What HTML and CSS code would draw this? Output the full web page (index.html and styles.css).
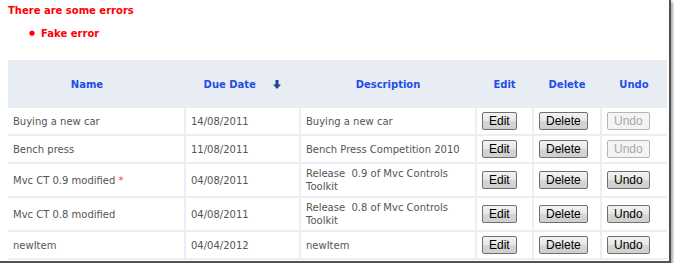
FILE: index.html
```html
<!DOCTYPE html>
<html>

<head>
    <title>Tasks</title>
    <link rel="stylesheet" href="styles.css">
</head>

<body>
    <div class="frame">
        <div class="errors">
            <p class="errors-title">There are some errors</p>
            <ul class="errors-list">
                <li>Fake error</li>
            </ul>
        </div>

        <table class="grid">
            <colgroup>
                <col class="col-name">
                <col class="col-date">
                <col class="col-desc">
                <col class="col-edit">
                <col class="col-delete">
                <col class="col-undo">
            </colgroup>
            <thead>
                <tr>
                    <th class="th-name">Name</th>
                    <th>Due Date
                        <svg class="sort-arrow" width="8" height="9" viewBox="0 0 8 9">
                            <path d="M2.5 0h3v4.5H8L4 9 0 4.5h2.5z" fill="#1c4696"/>
                        </svg>
                    </th>
                    <th>Description</th>
                    <th>Edit</th>
                    <th>Delete</th>
                    <th>Undo</th>
                </tr>
            </thead>
            <tbody>
                <tr class="row-short">
                    <td>Buying a new car</td>
                    <td>14/08/2011</td>
                    <td>Buying a new car</td>
                    <td class="btn-cell"><button class="btn">Edit</button></td>
                    <td class="btn-cell"><button class="btn">Delete</button></td>
                    <td class="btn-cell"><button class="btn" disabled>Undo</button></td>
                </tr>
                <tr class="row-short">
                    <td>Bench press</td>
                    <td>11/08/2011</td>
                    <td>Bench Press Competition 2010</td>
                    <td class="btn-cell"><button class="btn">Edit</button></td>
                    <td class="btn-cell"><button class="btn">Delete</button></td>
                    <td class="btn-cell"><button class="btn" disabled>Undo</button></td>
                </tr>
                <tr class="row-tall">
                    <td>Mvc CT 0.9 modified <span class="changed">*</span></td>
                    <td>04/08/2011</td>
                    <td>Release&nbsp; 0.9 of Mvc Controls Toolkit</td>
                    <td class="btn-cell"><button class="btn">Edit</button></td>
                    <td class="btn-cell"><button class="btn">Delete</button></td>
                    <td class="btn-cell"><button class="btn">Undo</button></td>
                </tr>
                <tr class="row-tall">
                    <td>Mvc CT 0.8 modified</td>
                    <td>04/08/2011</td>
                    <td>Release&nbsp; 0.8 of Mvc Controls Toolkit</td>
                    <td class="btn-cell"><button class="btn">Edit</button></td>
                    <td class="btn-cell"><button class="btn">Delete</button></td>
                    <td class="btn-cell"><button class="btn">Undo</button></td>
                </tr>
                <tr class="row-short">
                    <td>newItem</td>
                    <td>04/04/2012</td>
                    <td>newItem</td>
                    <td class="btn-cell"><button class="btn">Edit</button></td>
                    <td class="btn-cell"><button class="btn">Delete</button></td>
                    <td class="btn-cell"><button class="btn">Undo</button></td>
                </tr>
            </tbody>
        </table>
    </div>
</body>

</html>
```

FILE: styles.css
```css
body {
    margin: 0;
    background-color: #fff;
    font-family: "DejaVu Sans", Verdana, sans-serif;
    font-size: 10px;
    color: #555;
}

.frame {
    width: 671px;
    height: 263px;
    border-right: 2px solid #505050;
    border-bottom: 2px solid #505050;
    box-shadow: 2px 2px 3px rgba(0, 0, 0, 0.35);
    overflow: hidden;
    box-sizing: border-box;
}

.errors {
    color: #f00;
    font-weight: bold;
    font-size: 10px;
    padding: 5px 0 0 8px;
}

.errors-title {
    margin: 0;
}

.errors-list {
    margin: 12px 0 0 0;
    padding-left: 33px;
    list-style: none;
}

.errors-list li::before {
    content: "\25CF";
    font-size: 7px;
    vertical-align: 2px;
    margin: 0 6px 0 -12px;
}

.grid {
    border-collapse: collapse;
    table-layout: fixed;
    margin: 21px 0 0 8px;
    width: 659px;
}

.col-name { width: 177px; }
.col-date { width: 115px; }
.col-desc { width: 176px; }
.col-edit { width: 57px; }
.col-delete { width: 68px; }
.col-undo { width: 66px; }

.grid th {
    background-color: #e8edf4;
    color: #1f4de6;
    font-weight: bold;
    font-size: 10px;
    height: 48px;
    padding: 0;
}

.grid th.th-name {
    padding-right: 19px;
}

.grid td {
    border: 2px solid #ebeff5;
    padding: 0 5px;
    line-height: 13px;
}

.grid tr:first-child td {
    border-top: none;
}

.grid td:first-child {
    border-left: none;
}

.grid td:last-child {
    border-right: none;
}

.row-short td {
    height: 26px;
}

.row-tall td {
    height: 32px;
}

.sort-arrow {
    margin-left: 14px;
    vertical-align: -1px;
}

.changed {
    color: #f33;
}

.btn-cell {
    text-align: left;
}

.btn {
    font-family: "Liberation Sans", Arial, sans-serif;
    font-size: 12px;
    color: #000;
    height: 18px;
    padding: 0 6px;
    border: 1px solid #707070;
    border-radius: 2px;
    background: linear-gradient(#f2f2f2, #e6e6e6 50%, #d6d6d6 51%, #cfcfcf);
    line-height: 14px;
}

.btn:disabled {
    color: #a8a8a8;
    border-color: #b5b5b5;
    background: #f4f4f4;
}
```
